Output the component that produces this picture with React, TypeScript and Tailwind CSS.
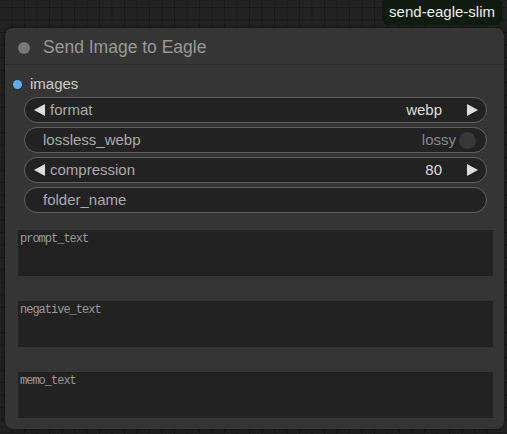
const Arrow = ({ dir }: { dir: 'left' | 'right' }) => (
  <svg width="13" height="14" viewBox="0 0 13 14" className="shrink-0">
    {dir === 'left' ? <polygon points="12,1 12,13 1,7" fill="#ddd" /> : <polygon points="1,1 1,13 12,7" fill="#ddd" />}
  </svg>
);

const ComboWidget = ({ label, value }: { label: string; value: string }) => (
  <div className="flex h-[26px] items-center rounded-full border border-[#616161] bg-[#222] pl-[8px] pr-[7px] text-[15px]">
    <Arrow dir="left" />
    <span className="ml-[4px] text-[#aaa]">{label}</span>
    <span className="ml-auto mr-[24px] text-[#ddd]">{value}</span>
    <Arrow dir="right" />
  </div>
);

const TextArea = ({ placeholder }: { placeholder: string }) => (
  <div className="h-[46px] bg-[#222] px-[2px] pt-[2px] font-['Liberation_Mono',monospace] text-[12px] leading-[15px] tracking-[-1px] text-[#999]">
    {placeholder}
  </div>
);

export default function App() {
  return (
    <div className="relative h-[434px] w-[507px] overflow-hidden bg-[#222] bg-[linear-gradient(to_right,#1a1a1a_1px,transparent_1px),linear-gradient(to_bottom,#1a1a1a_1px,transparent_1px)] bg-[size:12.5px_12.5px] bg-[position:-1px_7px] font-['Liberation_Sans',Arial,sans-serif]">
      <div className="absolute right-[5px] top-0 flex h-[25px] items-center rounded-b-[6px] rounded-t-[4px] bg-[#0f1b0f] px-[7px] text-[15px] text-[#eee]">
        send-eagle-slim
      </div>

      <div className="absolute left-[5px] top-[28px] flex h-[401px] w-[499px] flex-col rounded-[8px] bg-[#353535] shadow-[0_0_4px_rgba(0,0,0,0.6)]">
        <div className="flex h-[37px] items-center border-b border-[#2b2b2b] pl-[13px] pt-[3px]">
          <span className="h-[12px] w-[12px] rounded-full bg-[#777]" />
          <span className="ml-[13px] text-[17.5px] text-[#999]">Send Image to Eagle</span>
        </div>

        <div className="mt-[9px] flex h-[20px] items-center pl-[8px]">
          <span className="h-[9px] w-[9px] rounded-full bg-[#5ab0f2]" />
          <span className="ml-[8px] text-[15px] text-[#ccc]">images</span>
        </div>

        <div className="mt-[3px] flex flex-col gap-[4px] pl-[19px] pr-[17px]">
          <ComboWidget label="format" value="webp" />
          <div className="flex h-[26px] items-center rounded-full border border-[#616161] bg-[#222] pl-[18px] pr-[10px] text-[15px]">
            <span className="text-[#aaa]">lossless_webp</span>
            <span className="ml-auto mr-[3px] text-[#888]">lossy</span>
            <span className="h-[17px] w-[17px] rounded-full bg-[#383838]" />
          </div>
          <ComboWidget label="compression" value="80" />
          <div className="flex h-[26px] items-center rounded-full border border-[#616161] bg-[#222] pl-[18px] text-[15px]">
            <span className="text-[#aaa]">folder_name</span>
          </div>
        </div>

        <div className="mt-[17px] flex flex-col gap-[25px] pl-[13px] pr-[11px]">
          <TextArea placeholder="prompt_text" />
          <TextArea placeholder="negative_text" />
          <TextArea placeholder="memo_text" />
        </div>
      </div>
    </div>
  );
}
